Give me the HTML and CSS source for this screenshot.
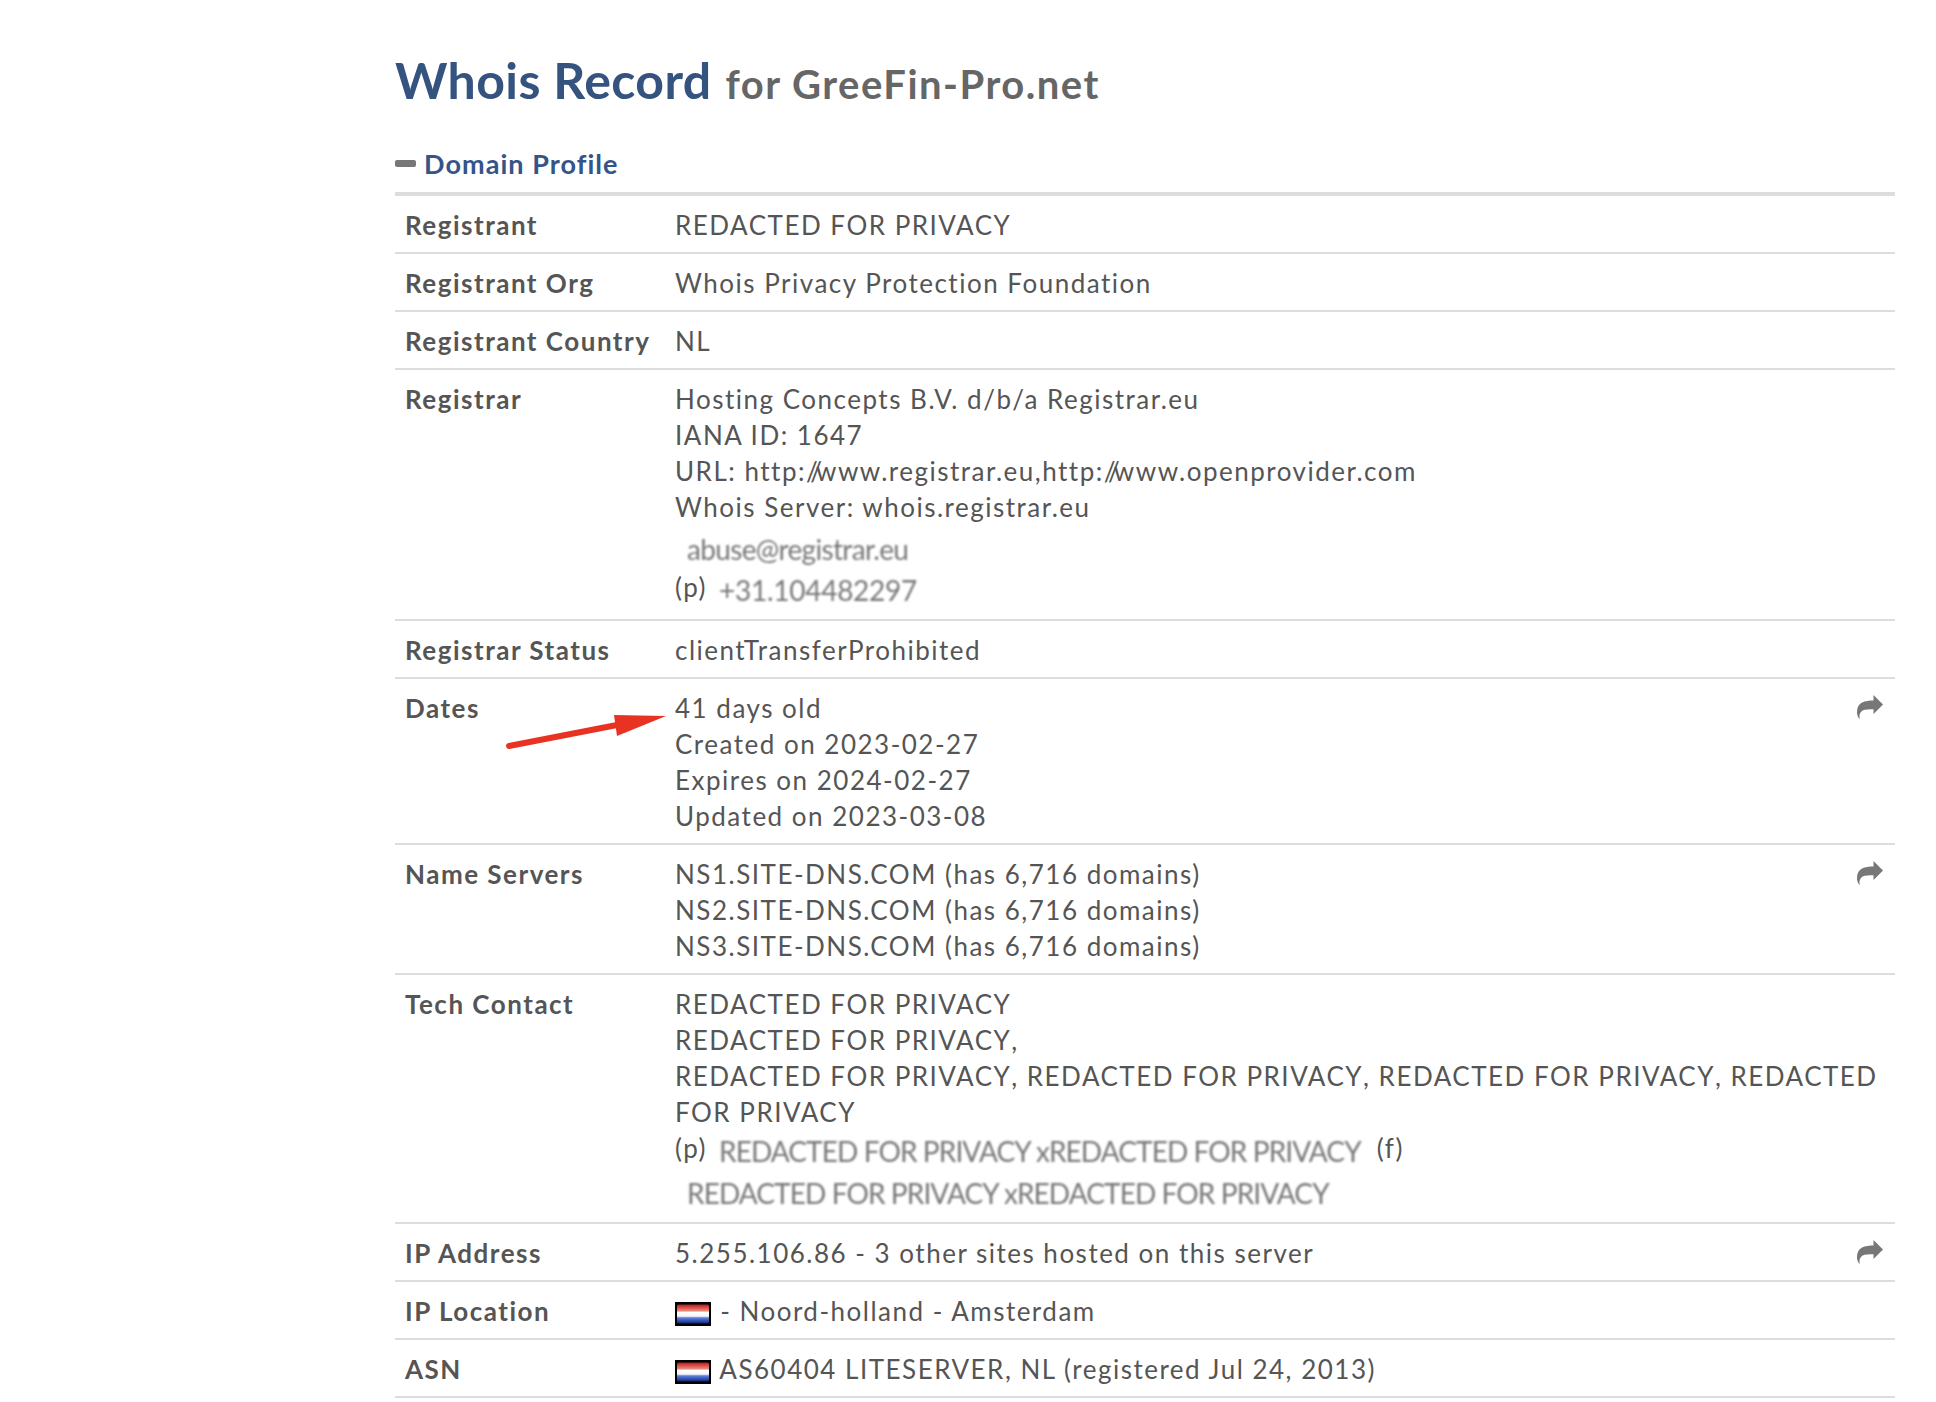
FILE: index.html
```html
<!DOCTYPE html>
<html lang="en">
<head>
<meta charset="utf-8">
<title>Whois Record for GreeFin-Pro.net</title>
<link rel="stylesheet" href="styles.css">
</head>
<body>
<svg width="0" height="0" class="defs">
  <defs>
    <symbol id="share" viewBox="0 0 26 24"><path d="M26 9.500 16.500 0v5.600C8 5.600 0 7.200 0 17.200c0 2.600 1 5 2.400 6.800.3-.2.3-.5.2-.9-.6-3 .4-6 3-7.500 2.600-1.400 6.900-1.400 10.900-1.400V19z"/></symbol>
    <linearGradient id="nl" x1="0" y1="0" x2="0" y2="1">
      <stop offset="0" stop-color="#8f2a2a"/><stop offset=".14" stop-color="#e2433c"/><stop offset=".33" stop-color="#e58a80"/>
      <stop offset=".42" stop-color="#fff"/><stop offset=".62" stop-color="#f3f3f8"/><stop offset=".7" stop-color="#5f7fd6"/>
      <stop offset=".86" stop-color="#2f52b8"/><stop offset="1" stop-color="#16265f"/>
    </linearGradient>
    <filter id="soft"><feGaussianBlur stdDeviation=".5"/></filter>
    <symbol id="flag" viewBox="0 0 36 24"><rect width="36" height="24" fill="#000"/><rect x="2" y="2.500" width="32" height="19" rx="1.500" fill="url(#nl)" filter="url(#soft)"/></symbol>
  </defs>
</svg>
<main class="page">
  <h1 class="title"><span class="title-main">Whois Record</span> <span class="title-sub">for GreeFin-Pro.net</span></h1>
  <h2 class="section"><span class="minus"></span>Domain Profile</h2>
  <div class="profile">
    <div class="row"><div class="label">Registrant</div><div class="value">REDACTED FOR PRIVACY</div></div>
    <div class="row"><div class="label">Registrant Org</div><div class="value">Whois Privacy Protection Foundation</div></div>
    <div class="row"><div class="label">Registrant Country</div><div class="value">NL</div></div>
    <div class="row"><div class="label">Registrar</div><div class="value">
      <div>Hosting Concepts B.V. d/b/a Registrar.eu</div>
      <div>IANA ID: 1647</div>
      <div>URL: http:<span class="slash-a">/</span><span class="slash-b">/</span>www.registrar.eu,http:<span class="slash-a">/</span><span class="slash-b">/</span>www.openprovider.com</div>
      <div>Whois Server: whois.registrar.eu</div>
      <div class="contact contact-first"><span class="blur indent email">abuse@registrar.eu</span></div>
      <div class="contact"><span class="tag">(p)</span><span class="blur phone">+31.104482297</span></div>
    </div></div>
    <div class="row"><div class="label">Registrar Status</div><div class="value">clientTransferProhibited</div></div>
    <div class="row"><div class="label">Dates</div><div class="value">
      <div>41 days old</div>
      <div>Created on 2023-02-27</div>
      <div>Expires on 2024-02-27</div>
      <div>Updated on 2023-03-08</div>
    </div><svg class="share"><use href="#share"/></svg>
      <svg class="arrow" viewBox="0 0 165 42"><path d="M4 36 112 15" class="arrow-line"/><path d="M161 6 109 5 112 26z" class="arrow-head"/></svg>
    </div>
    <div class="row"><div class="label">Name Servers</div><div class="value">
      <div>NS1.SITE-DNS.COM (has 6,716 domains)</div>
      <div>NS2.SITE-DNS.COM (has 6,716 domains)</div>
      <div>NS3.SITE-DNS.COM (has 6,716 domains)</div>
    </div><svg class="share"><use href="#share"/></svg></div>
    <div class="row"><div class="label">Tech Contact</div><div class="value">
      <div>REDACTED FOR PRIVACY</div>
      <div>REDACTED FOR PRIVACY<span class="comma">,</span></div>
      <div>REDACTED FOR PRIVACY<span class="comma">,</span> REDACTED FOR PRIVACY<span class="comma">,</span> REDACTED FOR PRIVACY<span class="comma">,</span> REDACTED</div>
      <div>FOR PRIVACY</div>
      <div class="contact"><span class="tag">(p)</span><span class="blur">REDACTED FOR PRIVACY xREDACTED FOR PRIVACY</span><span class="tag tag-after">(f)</span></div>
      <div class="contact contact-last"><span class="blur indent">REDACTED FOR PRIVACY xREDACTED FOR PRIVACY</span></div>
    </div></div>
    <div class="row"><div class="label">IP Address</div><div class="value">5.255.106.86 - 3 other sites hosted on this server</div><svg class="share"><use href="#share"/></svg></div>
    <div class="row"><div class="label">IP Location</div><div class="value"><svg class="flag"><use href="#flag"/></svg> - Noord-holland - Amsterdam</div></div>
    <div class="row"><div class="label">ASN</div><div class="value"><svg class="flag"><use href="#flag"/></svg> AS60404 LITESERVER, NL (registered Jul 24, 2013)</div></div>
  </div>
</main>
</body>
</html>
```
FILE: styles.css
```css
* { box-sizing: border-box; }
html, body { margin: 0; background: #fff; }
body { font-family: Lato, "Liberation Sans", sans-serif; color: #555; height: 1402px; overflow: hidden; }
.defs { position: absolute; }
.page { width: 1500px; margin-left: 395px; padding-top: 49px; }
.title { margin: 0; font-weight: 700; line-height: 62px; }
.title-main { font-size: 50px; color: #34537f; letter-spacing: .4px; }
.title-sub { font-size: 40px; color: #666; letter-spacing: 1.5px; margin-left: 6px; }
.section { margin: 24px 0 0; height: 54px; display: flex; align-items: center; font-size: 27px; font-weight: 700; color: #34548a; letter-spacing: 1.05px; border-bottom: 4px solid #ddd; padding-bottom: 8px; }
.minus { width: 21px; height: 7px; border-radius: 2px; background: #777; margin-right: 8px; }
.row { position: relative; display: flex; padding: 11px 0 9px; border-bottom: 2px solid #ddd; font-size: 26px; line-height: 36px; letter-spacing: 1.5px; }
.label { width: 280px; padding-left: 10px; flex: none; font-weight: 700; color: #555; }
.value { flex: 1; padding-right: 10px; color: #555; }
.slash-a { letter-spacing: -7.5px; }
.slash-b { letter-spacing: -6px; }
.comma { font-kerning: none; }
.contact { line-height: 41px; height: 41px; display: flex; align-items: center; }
.contact-first { margin-top: 3px; }
.contact-last { margin-top: 1px; }
.blur { color: #777; filter: blur(.8px); letter-spacing: -.9px; font-size: 28px; margin-top: 2px; }
.email { letter-spacing: -.67px; }
.phone { letter-spacing: -.27px; }
.indent { margin-left: 12px; }
.tag { margin-right: 12px; margin-top: -4px; }
.tag-after { margin: -4px 0 0 16px; }
.share { position: absolute; right: 12px; top: 16px; width: 26px; height: 24px; fill: #777; }
.flag { width: 36px; height: 24px; vertical-align: -5px; margin-right: 1px; }
.arrow { position: absolute; left: 110px; top: 31px; width: 165px; height: 42px; }
.arrow-line { stroke: #e83323; stroke-width: 6; stroke-linecap: round; fill: none; }
.arrow-head { fill: #e83323; }
```
